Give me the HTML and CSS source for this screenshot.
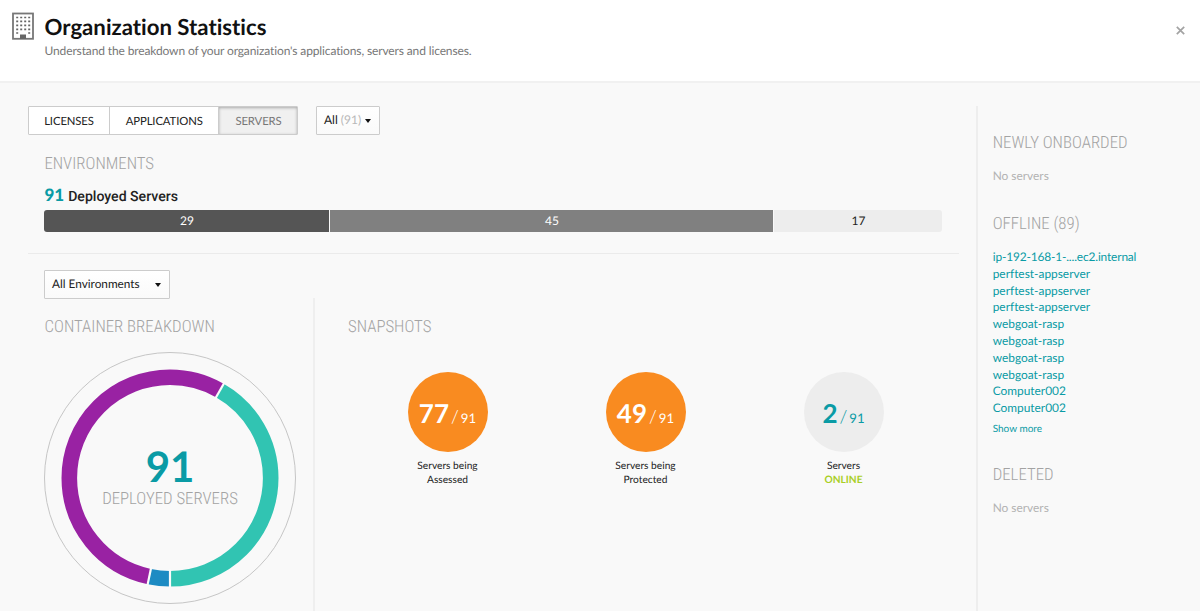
FILE: index.html
```html
<!DOCTYPE html>
<html lang="en">
<head>
<meta charset="utf-8">
<title>Organization Statistics</title>
<link rel="stylesheet" href="styles.css">
</head>
<body>
<header class="header">
  <svg class="building" width="22" height="28" viewBox="0 0 22 28">
    <rect x="1" y="1.5" width="20" height="25.3" fill="#fff" stroke="#777" stroke-width="1.8"/>
    <path d="M4.2 5.5h14M4.2 9.3h14M4.2 13.3h14M4.2 17.3h14M4.2 21h2M16.2 21h2" stroke="#666" stroke-width="1.7" stroke-dasharray="2 2" fill="none"/>
    <path d="M8 22.5h6v4.5H8z" fill="#666"/>
  </svg>
  <div class="titles">
    <h1 class="title">Organization Statistics</h1>
    <p class="subtitle">Understand the breakdown of your organization's applications, servers and licenses.</p>
  </div>
  <svg class="close" width="9" height="9" viewBox="0 0 9 9"><path d="M.8 .8l7.4 7.4M8.2 .8L.8 8.2" stroke="#a3a3a3" stroke-width="1.7"/></svg>
</header>
<div class="content">
  <main class="main">
    <div class="toolbar">
      <nav class="tabs">
        <a class="tab tab-licenses">LICENSES</a>
        <a class="tab tab-applications">APPLICATIONS</a>
        <a class="tab tab-servers active">SERVERS</a>
      </nav>
      <div class="select select-all"><span>All <span class="muted">(91)</span></span><i class="caret"></i></div>
    </div>
    <section class="environments">
      <h2 class="heading"><span>ENVIRONMENTS</span></h2>
      <p class="deployed"><b>91</b><span>Deployed Servers</span></p>
      <div class="bar">
        <div class="seg seg-dark">29</div>
        <div class="seg seg-mid">45</div>
        <div class="seg seg-light">17</div>
      </div>
    </section>
    <div class="details">
      <section class="breakdown">
        <div class="select select-env"><span>All Environments</span><i class="caret"></i></div>
        <h2 class="heading"><span>CONTAINER BREAKDOWN</span></h2>
        <div class="donut">
          <svg width="254" height="254" viewBox="-127 -127 254 254">
            <circle r="125.5" fill="none" stroke="#c6c6c6"/>
            <g fill="none" stroke-width="15.6" transform="rotate(90)">
              <circle r="100.7" pathLength="91" stroke="#1d8bc3" stroke-dasharray="3 88"/>
              <circle r="100.7" pathLength="91" stroke="#9922a3" stroke-dasharray="50 41" stroke-dashoffset="-3"/>
              <circle r="100.7" pathLength="91" stroke="#31c4b2" stroke-dasharray="38 53" stroke-dashoffset="-53"/>
            </g>
            <g stroke="#fbfbfb" stroke-width="2.2">
              <path d="M0 91V110"/>
              <path d="M0 91V110" transform="rotate(11.87)"/>
              <path d="M0 91V110" transform="rotate(209.67)"/>
            </g>
          </svg>
          <div class="donut-label"><b>91</b><span class="heading"><span>DEPLOYED SERVERS</span></span></div>
        </div>
      </section>
      <section class="snapshots">
        <h2 class="heading"><span>SNAPSHOTS</span></h2>
        <div class="stats">
          <div class="stat"><div class="disc"><b>77</b><i>/</i><span>91</span></div><p>Servers being<br>Assessed</p></div>
          <div class="stat"><div class="disc"><b>49</b><i>/</i><span>91</span></div><p>Servers being<br>Protected</p></div>
          <div class="stat"><div class="disc disc-gray"><b>2</b><i>/</i><span>91</span></div><p>Servers<br><strong>ONLINE</strong></p></div>
        </div>
      </section>
    </div>
  </main>
  <aside class="side">
    <h2 class="heading"><span>NEWLY ONBOARDED</span></h2>
    <p class="none">No servers</p>
    <h2 class="heading offline"><span>OFFLINE (89)</span></h2>
    <ul class="links">
      <li class="host">ip-192-168-1-....ec2.internal</li>
      <li>perftest-appserver</li>
      <li>perftest-appserver</li>
      <li>perftest-appserver</li>
      <li>webgoat-rasp</li>
      <li>webgoat-rasp</li>
      <li>webgoat-rasp</li>
      <li>webgoat-rasp</li>
      <li>Computer002</li>
      <li>Computer002</li>
    </ul>
    <a class="more">Show more</a>
    <h2 class="heading deleted"><span>DELETED</span></h2>
    <p class="none">No servers</p>
  </aside>
</div>
</body>
</html>
```
FILE: styles.css
```css
* { box-sizing: border-box; margin: 0; padding: 0; }
body { height: 611px; overflow: hidden; display: flex; flex-direction: column; background: #f9f9f9; color: #222; font: 11.9px/16px Lato, sans-serif; text-rendering: geometricPrecision; font-variant-ligatures: none; }
.header { display: flex; height: 83px; flex: none; padding: 12px 15px 0 12px; background: #fff; border-bottom: 2px solid #f1f1f1; }
.building { flex: none; }
.titles { flex: 1; padding-left: 10.5px; }
.title { font-size: 22.2px; line-height: 30px; font-weight: 700; color: #111; }
.subtitle { color: #777; font-size: 12px; letter-spacing: -.13px; line-height: 18px; }
.close { margin-top: 14px; }
.content { display: flex; flex: 1; padding-top: 23px; }
.main { width: 976px; flex: none; padding-left: 27.5px; }
.toolbar { display: flex; gap: 18px; }
.tabs { display: flex; height: 29px; border: 1px solid #ccc; border-radius: 1px; background: #fff; width: 270.5px; }
.tab { display: flex; align-items: center; justify-content: center; font-size: 11.3px; letter-spacing: -.1px; padding: 2px 0 0 1px; border-right: 1px solid #ccc; }
.tab-licenses { width: 81px; }
.tab-applications { width: 109.5px; }
.tab-servers { flex: 1; border: 0; }
.active { background: #f0f0f0; color: #777; box-shadow: inset 0 1px 3px #aaa; }
.select { display: flex; align-items: center; justify-content: space-between; height: 29px; border: 1px solid #ccc; border-radius: 1px; background: linear-gradient(#fff, #fafafa); }
.select-all { width: 64px; padding: 0 8px 2px 7px; font-size: 12px; }
.select-env { width: 126px; padding: 0 8px 1px 7px; font-size: 11.8px; }
.muted { color: #b8b8b8; }
.caret { border: 3.5px solid transparent; border-top: 4px solid #111; border-bottom: 0; position: relative; top: 1px; }
.heading { font: 300 16.8px/20px "Roboto Condensed", Roboto, sans-serif; font-stretch: 75%; color: #a3a3a3; white-space: nowrap; }
.heading > span { display: inline-block; }
.environments { padding: 19px 0 21px 16.9px; margin-right: 17px; border-bottom: 1px solid #ebebeb; }
.deployed { display: flex; align-items: baseline; gap: 4px; height: 20px; margin: 11px 0 5px; font: 500 14.1px/20px Roboto, sans-serif; color: #222; }
.deployed b { font: 900 17px/20px Lato, sans-serif; color: #0a9ba5; }
.bar { display: flex; gap: 1px; width: 898px; height: 22px; border-radius: 3px; overflow: hidden; font-size: 12px; line-height: 22px; text-align: center; color: #fff; }
.seg-dark { width: 285px; background: #555; }
.seg-mid { width: 443px; background: #808080; }
.seg-light { flex: 1; background: #ededed; color: #222; }
.details { display: flex; padding-left: 16.5px; }
.breakdown { width: 269px; padding-top: 16px; }
.breakdown > .heading { margin-top: 18px; padding-left: .5px; }
.donut { position: relative; width: 254px; height: 254px; margin: 14px 0 0 -1px; }
.donut svg { display: block; }
.donut-label { position: absolute; inset: 0; display: flex; flex-direction: column; align-items: center; padding-top: 91px; }
.donut-label b { font-size: 42px; line-height: 48px; color: #0a9ba5; }
.donut-label .heading { margin-top: -1px; }
.snapshots { flex: 1; margin-top: 44px; height: 320px; padding: 19px 0 0 33px; border-left: 2px solid #efefef; }
.stats { display: flex; padding: 35px 0 0 .5px; }
.stat { width: 198px; display: flex; flex-direction: column; align-items: center; text-align: center; font-size: 10.2px; line-height: 14.3px; }
.stat p { margin-top: 7px; }
.stat strong { color: #a9cf26; }
.disc { width: 80px; height: 80px; border-radius: 50%; background: #f98b20; color: #fff; display: flex; align-items: baseline; justify-content: center; line-height: 82px; }
.disc b { font-size: 26px; }
.disc i { font-style: normal; font-weight: 300; font-size: 18px; margin: 0 2px; }
.disc span { font-size: 13.2px; }
.disc-gray { background: #ededed; color: #0a9ba5; }
.side { flex: 1; padding: 27px 0 0 14.7px; border-left: 2px solid #eee; }
.none { margin-top: 15px; color: #b3b3b3; }
.side .offline { margin-top: 30px; }
.links { list-style: none; margin-top: 15px; line-height: 16.8px; color: #0a9ba5; }
.host { letter-spacing: -.15px; }
.more { display: block; margin-top: 5px; font-size: 10px; line-height: 14px; color: #0a9ba5; }
.side .deleted { margin-top: 29px; }
```
